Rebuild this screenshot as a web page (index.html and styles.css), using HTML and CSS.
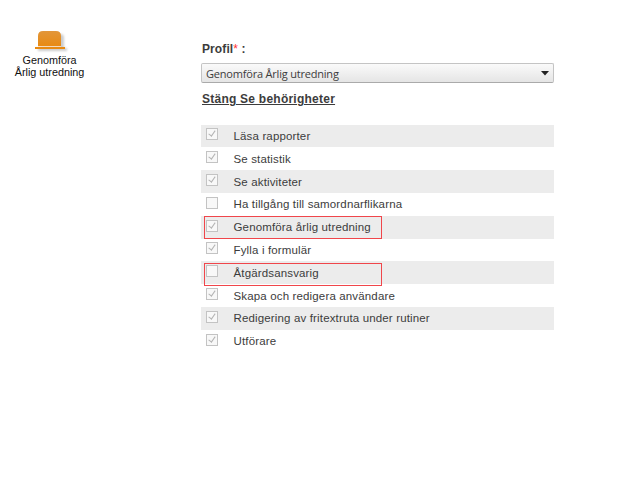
FILE: index.html
```html
<!DOCTYPE html>
<html lang="sv">
<head>
  <meta charset="UTF-8" />
  <title>Profil</title>
  <link rel="stylesheet" href="styles.css">
</head>
<body>
  <div class="page">
    <div class="role">
      <svg class="hat" width="36" height="24" viewBox="0 0 36 24">
        <defs>
          <linearGradient id="orange" x1="0" y1="0" x2="0" y2="1">
            <stop offset="0" stop-color="#e2963a"/>
            <stop offset="1" stop-color="#e88a12"/>
          </linearGradient>
        </defs>
        <path class="hat-shadow" d="M7 18V8q0-4 4-4h15q4 0 4 4v10h3v3H4v-3z"/>
        <path fill="url(#orange)" d="M4 16.200V6q0-5 5-5h13q5 0 5 5v10.200z"/>
        <path fill="#fbe3c4" d="M4 16.200h23v.8H4z"/>
        <path fill="#e88a12" d="M1 17h30v2H1z"/>
      </svg>
      <div class="role-name">Genomföra<br>Årlig utredning</div>
    </div>

    <div class="profile">
      <div class="label">Profil<span class="required">*</span> :</div>
      <div class="select">
        <span class="select-text">Genomföra Årlig utredning</span>
        <svg width="8" height="5" viewBox="0 0 8 5"><path d="M0 0h8L4 4.500z" fill="#222"/></svg>
      </div>
      <a class="toggle">Stäng Se behörigheter</a>

      <ul class="rights">
        <li><span class="box checked"></span><span class="text">Läsa rapporter</span></li>
        <li><span class="box checked"></span><span class="text">Se statistik</span></li>
        <li><span class="box checked"></span><span class="text">Se aktiviteter</span></li>
        <li><span class="box"></span><span class="text">Ha tillgång till samordnarflikarna</span></li>
        <li><span class="box checked"></span><span class="text">Genomföra årlig utredning</span><span class="marker"></span></li>
        <li><span class="box checked"></span><span class="text">Fylla i formulär</span></li>
        <li><span class="box"></span><span class="text">Åtgärdsansvarig</span><span class="marker low"></span></li>
        <li><span class="box checked"></span><span class="text">Skapa och redigera användare</span></li>
        <li><span class="box checked"></span><span class="text">Redigering av fritextruta under rutiner</span></li>
        <li><span class="box checked"></span><span class="text">Utförare</span></li>
      </ul>
    </div>
  </div>
</body>
</html>
```

FILE: styles.css
```css
body {
  font-family: "Liberation Sans", Arial, sans-serif;
  margin: 0;
  background: #fff;
  color: #3c3c3c;
}
.page {
  display: flex;
}
.role {
  width: 99px;
  padding-top: 30px;
  margin-right: 102px;
  color: #111;
  text-align: center;
}
.hat {
  display: block;
  margin-left: 34px;
}
.hat-shadow {
  fill: #ccc;
  filter: blur(1px);
}
.role-name {
  font-size: 10.8px;
  line-height: 12px;
  white-space: nowrap;
}
.profile {
  width: 353px;
  padding-top: 42px;
}
.label {
  font-size: 12px;
  font-weight: bold;
  letter-spacing: 0.1px;
  line-height: 15px;
  padding-left: 1px;
}
.required {
  color: #f33;
  font-weight: normal;
}
.select {
  display: flex;
  align-items: center;
  justify-content: space-between;
  box-sizing: border-box;
  height: 20px;
  margin-top: 6px;
  padding: 0 4px;
  border: 1px solid #c4c4c4;
  border-bottom-color: #aaa;
  border-radius: 2px;
  background: linear-gradient(#fafafa, #e5e5e5);
  font-family: "Open Sans", sans-serif;
  font-size: 11px;
  letter-spacing: -0.2px;
}
.toggle {
  display: block;
  margin-top: 8px;
  padding-left: 1px;
  font-size: 12px;
  font-weight: bold;
  letter-spacing: 0.24px;
  line-height: 16px;
  text-decoration: underline;
}
.rights {
  list-style: none;
  margin: 17.6px 0 0;
  padding: 0;
  font-size: 11.5px;
  letter-spacing: 0.15px;
}
.rights li {
  position: relative;
  display: flex;
  align-items: center;
  height: 22.8px;
}
.rights li:nth-child(odd) {
  background: #ececec;
}
.box {
  position: relative;
  box-sizing: border-box;
  width: 12px;
  height: 12px;
  margin: 0 15.5px 3px 5px;
  border: 1px solid #c3c3c3;
  background: #f8f8f8;
}
.checked::after {
  content: "";
  position: absolute;
  left: 3px;
  top: 0;
  width: 2.5px;
  height: 6px;
  border: solid #b4b4b4;
  border-width: 0 1.6px 1.6px 0;
  transform: rotate(35deg);
}
.marker {
  position: absolute;
  left: 3px;
  top: 0;
  box-sizing: border-box;
  width: 178px;
  height: 23px;
  border: 1px solid #f0464b;
}
.low {
  top: 1.5px;
}
```
